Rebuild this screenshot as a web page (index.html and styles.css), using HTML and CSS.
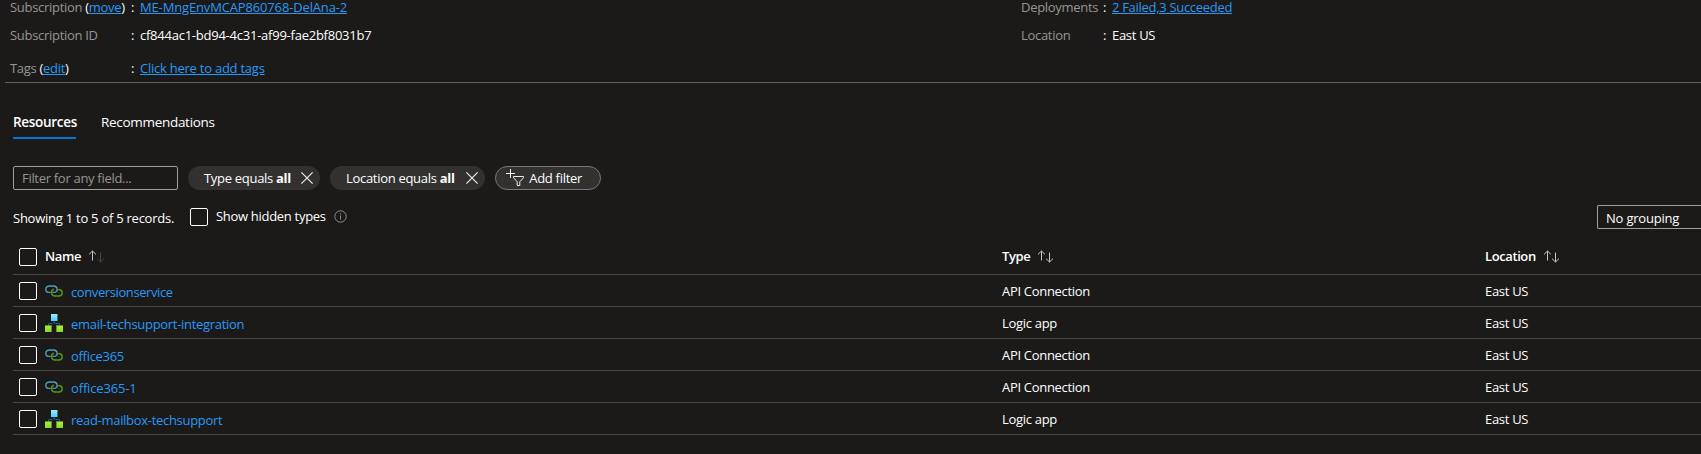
FILE: index.html
```html
<!DOCTYPE html>
<html lang="en">
<head>
<meta charset="utf-8">
<title>Resource group</title>
<link rel="stylesheet" href="styles.css">
</head>
<body>
<svg class="defs" width="0" height="0" aria-hidden="true">
  <defs>
    <linearGradient id="sky" x1="0" y1="1" x2="0" y2="0"><stop offset="0" stop-color="#4fd0f5"/><stop offset="1" stop-color="#9cebff"/></linearGradient>
    <linearGradient id="lime" x1="0" y1="1" x2="0" y2="0"><stop offset="0" stop-color="#86d633"/><stop offset="1" stop-color="#b4ec36"/></linearGradient>
  </defs>
  <symbol id="link" viewBox="0 0 18 18">
    <path d="M11 9.600c1.100-.7 1.400-1.800 1.100-2.900C11.800 5.200 10.600 4.200 9 4H4.500C2.500 4 .8 5.300.8 7.200s1.500 3.200 3.300 3.200h1.700" fill="none" stroke="#4f9dbb" stroke-width="1.400"/>
    <path d="M8.900 7.300C7.400 7.600 6.500 8.900 6.600 10.600c.1 2 1.600 3.300 3.500 3.400h3.600c2 0 3.500-1.400 3.500-3.200s-1.400-3.100-3.200-3.200h-1.500" fill="none" stroke="#549b0c" stroke-width="1.400"/>
    <path d="M7.500 10.400h1.800c.7 0 1.300-.3 1.800-.8" fill="none" stroke="#4f9dbb" stroke-width="1.300"/>
  </symbol>
  <symbol id="logic" viewBox="0 0 18 18">
    <path d="M9 7v2M3.500 12v-2.400h4L9 8.300l1.500 1.300h4V12" fill="none" stroke="#1c6692" stroke-width="1"/>
    <path fill="url(#sky)" d="M6 0h7v7H6z"/><path fill="#2e7795" d="M12 0h1v7h-1z"/>
    <path fill="url(#lime)" d="M0 11.500h7V18H0zM11 11.500h7V18h-7z"/>
    <path fill="#589b1e" d="M6 11.500h1V18H6zM11 11.500h1V18h-1z"/>
  </symbol>
  <symbol id="up" viewBox="0 0 9 12"><path d="M4.500 10.500V1.200M1 4.400 4.500 1 8 4.400" fill="none" stroke="currentColor"/></symbol>
  <symbol id="down" viewBox="0 0 9 12"><path d="M4.500 1.500v9.500M1 7.600 4.500 11 8 7.600" fill="none" stroke="currentColor"/></symbol>
  <symbol id="close" viewBox="0 0 12 12"><path d="m.4.400 11.200 11.200m0-11.200L.4 11.600" stroke="#f0efee" stroke-width="1.150"/></symbol>
</svg>

<section class="essentials">
  <dl class="facts facts-main">
    <div class="fact"><dt>Subscription <span class="paren">(<a href="#">move</a>)</span></dt><dd><a href="#" class="sub-name">ME-MngEnvMCAP860768-DelAna-2</a></dd></div>
    <div class="fact"><dt>Subscription ID</dt><dd><span class="guid">cf844ac1-bd94-4c31-af99-fae2bf8031b7</span></dd></div>
    <div class="fact fact-tags"><dt>Tags <span class="paren">(<a href="#">edit</a>)</span></dt><dd><a href="#" class="guid">Click here to add tags</a></dd></div>
  </dl>
  <dl class="facts facts-side">
    <div class="fact"><dt>Deployments</dt><dd><a href="#">2 Failed,3 Succeeded</a></dd></div>
    <div class="fact"><dt>Location</dt><dd>East US</dd></div>
  </dl>
</section>

<nav class="tabs">
  <a class="tab tab-active">Resources</a>
  <a class="tab">Recommendations</a>
</nav>

<div class="filters">
  <input class="search" type="text" placeholder="Filter for any field...">
  <span class="pill pill-type"><span>Type equals <b>all</b></span><svg class="x" width="12" height="12"><use href="#close"/></svg></span>
  <span class="pill pill-loc"><span>Location equals <b>all</b></span><svg class="x" width="12" height="12"><use href="#close"/></svg></span>
  <span class="pill pill-add"><svg width="19" height="18" viewBox="0 0 19 18" fill="none" stroke="#f0efee"><path d="M4.500 0v9M0 4.500h9M7.500 7.500h10v1.200l-3.700 4.100v3.700h-2.600v-3.700L7.500 8.700z"/></svg><span>Add filter</span></span>
</div>

<div class="summary">
  <span class="count">Showing 1 to 5 of 5 records.</span>
  <span class="box"></span>
  <span class="hidden-label">Show hidden types</span>
  <svg class="info" width="13" height="13" viewBox="0 0 13 13" fill="none" stroke="#8f8d8b"><circle cx="6.500" cy="6.500" r="5.700"/><path d="M6.500 5.500v4M6.500 3.300v1.200"/></svg>
  <span class="grouping">No grouping</span>
</div>

<div class="grid">
  <div class="row head">
    <span class="cell"><span class="box"></span><b class="h-name">Name</b><span class="sort"><svg class="up"><use href="#up"/></svg><svg class="down dim"><use href="#down"/></svg></span></span>
    <span class="cell"><b>Type</b><span class="sort"><svg class="up"><use href="#up"/></svg><svg class="down"><use href="#down"/></svg></span></span>
    <span class="cell"><b>Location</b><span class="sort"><svg class="up"><use href="#up"/></svg><svg class="down"><use href="#down"/></svg></span></span>
  </div>
  <div class="row"><span class="cell"><span class="box"></span><svg class="kind"><use href="#link"/></svg><a href="#" class="tight">conversionservice</a></span><span class="cell">API Connection</span><span class="cell">East US</span></div>
  <div class="row"><span class="cell"><span class="box"></span><svg class="kind"><use href="#logic"/></svg><a href="#">email-techsupport-integration</a></span><span class="cell">Logic app</span><span class="cell">East US</span></div>
  <div class="row"><span class="cell"><span class="box"></span><svg class="kind"><use href="#link"/></svg><a href="#">office365</a></span><span class="cell">API Connection</span><span class="cell">East US</span></div>
  <div class="row"><span class="cell"><span class="box"></span><svg class="kind"><use href="#link"/></svg><a href="#" class="loose">office365-1</a></span><span class="cell">API Connection</span><span class="cell">East US</span></div>
  <div class="row"><span class="cell"><span class="box"></span><svg class="kind"><use href="#logic"/></svg><a href="#">read-mailbox-techsupport</a></span><span class="cell">Logic app</span><span class="cell">East US</span></div>
</div>
</body>
</html>
```
FILE: styles.css
```css
* { box-sizing: border-box; }
body {
  margin: 0;
  height: 454px;
  overflow: hidden;
  background: #1b1a19;
  color: #fff;
  font: 13px/18px "Segoe UI", "Open Sans", "Noto Sans", sans-serif;
  letter-spacing: -0.3px;
  white-space: nowrap;
}
.defs { display: block; }
a { color: #2899f5; }
b { font-weight: 600; }

.essentials {
  display: flex;
  height: 83px;
  margin-left: 5px;
  padding-left: 5px;
  border-bottom: 1px solid #605e5c;
}
.facts { margin: -2px 0 0; }
.facts-main { width: 1011px; }
.fact { display: flex; height: 28px; }
.fact-tags { margin-top: 5px; }
.fact dt { width: 121px; color: #979593; }
.facts-side dt { width: 82px; }
.paren { color: #fff; }
.fact dd { display: flex; margin: 0; }
.fact dd::before { content: ":"; width: 9px; }
.sub-name { letter-spacing: -0.15px; }
.guid { letter-spacing: -0.24px; }

.tabs { display: flex; gap: 25px; height: 56px; margin-left: 13px; padding-top: 30px; }
.tab { height: 26px; color: #fff; font-size: 13.5px; }
.tab-active { width: 63px; border-bottom: 2px solid #0078d4; font-weight: 600; }

.filters { display: flex; height: 24px; margin: 27px 0 0 13px; }
.search {
  width: 165px;
  height: 24px;
  padding: 0 8px;
  border: 1px solid #a19f9d;
  border-radius: 2px;
  background: transparent;
  font: inherit;
  letter-spacing: inherit;
}
.search::placeholder { color: #979593; opacity: 1; }
.pill {
  display: flex;
  align-items: center;
  justify-content: space-between;
  height: 24px;
  margin-left: 10px;
  padding: 0 7px 0 16px;
  border-radius: 12px;
  background: #323130;
}
.pill b { font-weight: 700; }
.pill-type { width: 132px; }
.pill-loc { width: 155px; }
.pill-add { width: 106px; padding: 0 18px 0 10px; border: 1px solid #797775; }

.summary { display: flex; height: 58px; margin-left: 13px; padding-top: 15px; }
.box { flex: none; width: 18px; height: 18px; border: 1px solid #fff; border-radius: 2px; }
.count { width: 177px; padding-top: 4px; letter-spacing: -0.25px; }
.summary .box { margin-top: 3px; }
.hidden-label { width: 126px; padding: 2px 0 0 8px; }
.info { margin-top: 5px; }
.grouping {
  width: 104px;
  height: 24px;
  margin-left: auto;
  padding: 3px 8px 0;
  border: 1px solid #a19f9d;
  border-right: 0;
  border-radius: 2px 0 0 2px;
  letter-spacing: -0.2px;
}

.grid { margin-left: 13px; margin-top: -9px; }
.row { display: grid; grid-template-columns: 989px 483px 1fr; height: 32px; border-bottom: 1px solid #484644; }
.head { height: 36px; }
.cell { display: flex; align-items: center; padding-top: 1px; }
.cell .box { margin-left: 6px; }
.cell b { margin-bottom: 2px; letter-spacing: -0.4px; }
.cell .h-name { margin-left: 8px; }
.sort { display: flex; margin: 0 0 2px 7px; color: #c8c6c4; }
.up, .down { width: 9px; height: 12px; }
.down { margin-left: -1px; margin-top: 1px; }
.dim { color: #484644; }
.kind { width: 18px; height: 18px; margin: 0 8px; }
.cell a { padding-top: 2px; text-decoration: none; }
.tight { letter-spacing: -0.4px; }
.loose { letter-spacing: -0.15px; }
```
